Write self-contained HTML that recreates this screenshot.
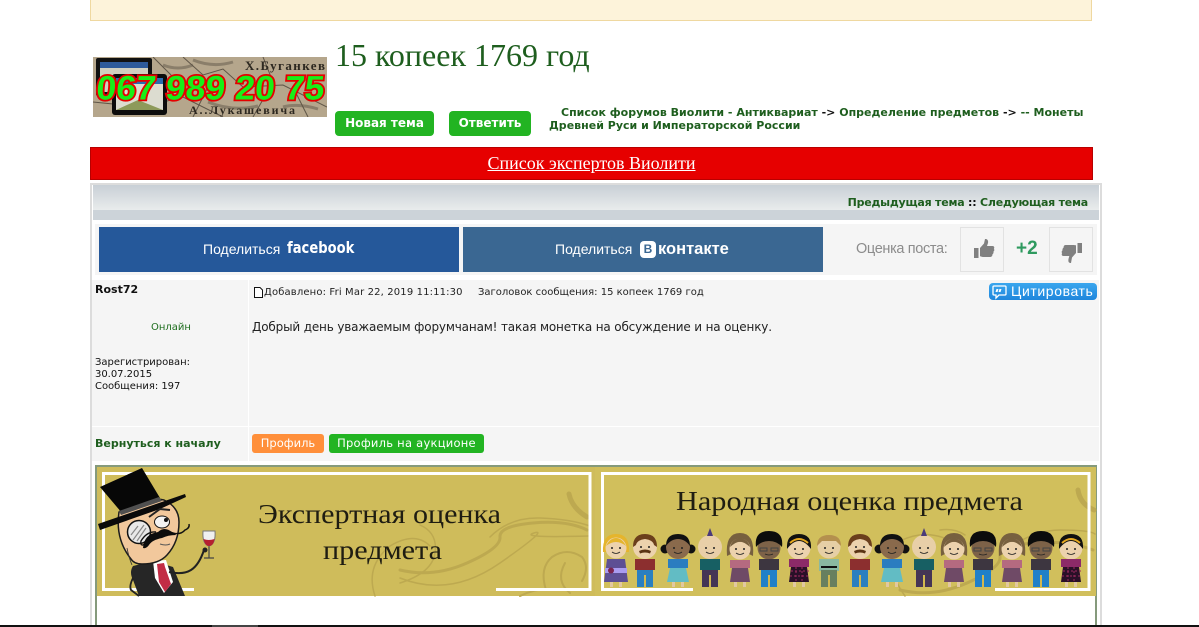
<!DOCTYPE html>
<html lang="ru"><head><meta charset="utf-8"><title>15 копеек 1769 год</title>
<style>
html,body{margin:0;padding:0;background:#fff;width:1199px;height:627px;overflow:hidden}
body{position:relative;font-family:"DejaVu Sans","Liberation Sans",sans-serif}
.a{position:absolute;white-space:nowrap}
.g{color:#1e5e1e;font-weight:bold}
.btn{background:#22b422;color:#fff;font-weight:bold;border-radius:4px;text-align:center;font-size:12px;line-height:25px;height:25px}
.box{position:absolute;top:227px;width:42px;height:43px;border:1px solid #e2e2e2;background:#f5f5f5}
</style></head><body>
<div class="a" style="left:90px;top:-1px;width:1000px;height:20px;background:#fdf3da;border:1px solid #efd8a0"></div>

<svg class="a" style="left:93px;top:57px" width="234" height="60" viewBox="0 0 234 60">
<rect width="234" height="60" fill="#b5a68c"/>
<g stroke="#5f5547" fill="none" stroke-width="1">
<path d="M90 0L110 18 130 12 150 30 190 28 234 50M170 0L180 25 160 60M0 45L50 50 90 40 130 60M120 20L100 60M200 30L215 60M60 0L85 25"/>
<path d="M100 3q20 8 40 2M115 45q25 10 50 4M190 50q15-4 35 2M70 8q15 6 30 0" stroke-width="3" opacity=".5"/>
</g>
<text x="152" y="13" font-family="Liberation Serif" font-size="13" font-weight="bold" fill="#2d2820" textLength="80">Х.Буганкев</text>
<text x="96" y="57" font-family="Liberation Serif" font-size="12" font-weight="bold" fill="#2d2820" textLength="106">А..Лукашевича</text>
<rect x="3" y="1" width="56" height="38" rx="2" fill="#111"/><rect x="7" y="5" width="48" height="30" fill="#cfcfc0"/><rect x="7" y="5" width="48" height="6" fill="#2d5a9a"/>
<rect x="19" y="17" width="55" height="41" rx="3" fill="#0c0c0c"/><rect x="23" y="21" width="47" height="32" fill="#dcdcd0"/><rect x="23" y="21" width="47" height="6" fill="#2a6cb0"/>
<path d="M23 53L45 43 70 53Z" fill="#8d9a5a"/>
<g transform="translate(1.500,42.500) skewX(-5)">
<text x="1" y="0" font-family="Liberation Sans" font-size="34" font-weight="bold" fill="#18ee18" stroke="#e60000" stroke-width="3.600" paint-order="stroke" textLength="228" lengthAdjust="spacingAndGlyphs">067 989 20 75</text>
</g>
</svg>

<div class="a" style="left:335px;top:37px;font:32px 'Liberation Serif',serif;color:#1e5e1e">15 копеек 1769 год</div>
<div class="a btn" style="left:335px;top:111px;width:99px">Новая тема</div>
<div class="a btn" style="left:449px;top:111px;width:82px">Ответить</div>
<div class="a g" style="left:561px;top:106px;font-size:11px;line-height:13px">Список форумов Виолити - Антиквариат <span style="color:#111">-&gt;</span> Определение предметов <span style="color:#111">-&gt;</span> -- Монеты</div>
<div class="a g" style="left:549px;top:119px;font-size:11px;line-height:13px;letter-spacing:.01px">Древней Руси и Императорской России</div>

<div class="a" style="left:90px;top:147px;width:1001px;height:31px;background:#e60000;border:1px solid #b80000;text-align:center;font:18px/31px 'Liberation Serif',serif;color:#fff;text-decoration:underline">Список экспертов Виолити</div>

<div class="a" style="left:90px;top:183px;width:1008px;height:460px;border:2px solid #dcdcdc;border-bottom:0"></div>
<div class="a" style="left:93px;top:185px;width:1006px;height:25px;background:linear-gradient(#c8cfd6,#e9ecec)"></div>
<div class="a" style="left:93px;top:210px;width:1006px;height:10px;background:#ccd3d9"></div>
<div class="a g" style="right:111px;top:196px;font-size:11px;line-height:14px;letter-spacing:-.22px">Предыдущая тема <span style="color:#111">::</span> Следующая тема</div>

<div class="a" style="left:95px;top:224px;width:1002px;height:51px;background:#f5f5f5"></div>
<div class="a" style="left:99px;top:227px;width:360px;height:45px;background:#25589a"></div>
<div class="a" style="left:203px;top:240px;font:14px/18px 'Liberation Sans',sans-serif;color:#fff">Поделиться</div>
<div class="a" style="left:287px;top:238px;font:bold 16px/20px 'DejaVu Sans',sans-serif;color:#fff;transform:scaleX(.82);transform-origin:0 0">facebook</div>
<div class="a" style="left:463px;top:227px;width:360px;height:45px;background:#3a6792"></div>
<div class="a" style="left:555px;top:240px;font:14px/18px 'Liberation Sans',sans-serif;color:#fff">Поделиться</div>
<div class="a" style="left:640px;top:241px;width:16px;height:17px;border-radius:4px;background:#fff;color:#3a6792;font:bold 12px/17px 'Liberation Sans',sans-serif;text-align:center">В</div>
<div class="a" style="left:658px;top:239px;font:bold 16.5px/20px 'Liberation Sans',sans-serif;color:#fff">контакте</div>
<div class="a" style="left:856px;top:241px;font:14.5px/17px 'Liberation Sans',sans-serif;color:#8c8c8c;letter-spacing:-.35px">Оценка поста:</div>
<div class="box" style="left:960px"></div>
<svg class="a" style="left:973px;top:238px" width="22" height="22" viewBox="0 0 22 22"><path d="M1 10h4.500v10H1zM7 10l4-4.500L12 1c2.300-.4 3.500 1.500 3 4l-1 3h5.500c1.800 0 2.200 1.800 1.400 2.800.7 1 .5 2.200-.5 2.900.4 1-.1 2.200-1 2.700.2 1.300-.7 2.600-2 2.600H10c-1.400 0-2-.8-3-.8z" fill="#808080"/></svg>
<div class="a" style="left:1016px;top:238px;font:bold 19px/22px 'Liberation Sans',sans-serif;color:#2f9a5f">+2</div>
<div class="box" style="left:1049px"></div>
<svg class="a" style="left:1061px;top:242px" width="22" height="22" viewBox="0 0 22 22"><path d="M16.500 1H21v10h-4.500zM15 11l-4 4.500L10 21c-2.300.4-3-1.500-2.500-4l.8-3H2.500C.7 14 .3 12.200 1.100 11.200.4 10.200.600 9 1.600 8.300c-.4-1 .1-2.200 1-2.700C2.400 4.300 3.300 3 4.600 3H12c1.400 0 2 .3 3 .3z" fill="#808080"/></svg>

<div class="a" style="left:92px;top:280px;width:156px;height:146px;background:#f5f5f5"></div>
<div class="a" style="left:249px;top:280px;width:850px;height:146px;background:#f5f5f5"></div>
<div class="a" style="left:92px;top:427px;width:156px;height:34px;background:#f5f5f5"></div>
<div class="a" style="left:249px;top:427px;width:850px;height:34px;background:#f5f5f5"></div>

<div class="a" style="left:95px;top:283px;font-size:11px;font-weight:bold;line-height:14px;color:#111">Rost72</div>
<div class="a" style="left:151px;top:321px;font-size:10px;line-height:13px;color:#1e6e1e">Онлайн</div>
<div class="a" style="left:95px;top:357px;font-size:10px;line-height:12px;color:#111;letter-spacing:-.02px">Зарегистрирован:<br>30.07.2015<br>Сообщения: 197</div>
<div class="a g" style="left:95px;top:437px;font-size:11px;line-height:14px">Вернуться к началу</div>

<svg class="a" style="left:254px;top:287px" width="9" height="11" viewBox="0 0 9 11"><path d="M.5.500h5.500l2.500 2.500v7.500H.5z" fill="#fff" stroke="#111"/></svg>
<div class="a" style="left:264px;top:286px;font-size:10px;line-height:13px;color:#222;letter-spacing:.14px">Добавлено: Fri Mar 22, 2019 11:11:30</div>
<div class="a" style="left:478px;top:286px;font-size:10px;line-height:13px;color:#222">Заголовок сообщения: 15 копеек 1769 год</div>
<div class="a" style="left:989px;top:283px;width:108px;height:17px;border-radius:4px;background:linear-gradient(#3aa6ee,#1f86dc)"></div>
<svg class="a" style="left:992px;top:285px" width="15" height="15" viewBox="0 0 15 15"><path d="M2 1h11a1 1 0 0 1 1 1v7a1 1 0 0 1-1 1H7l-3 3v-3H2a1 1 0 0 1-1-1V2a1 1 0 0 1 1-1z" fill="none" stroke="#fff" stroke-width="1.300"/><path d="M5 4l-1 3M8 4L7 7M6 4L5 7M9 4L8 7" stroke="#fff" stroke-width="1"/></svg>
<div class="a" style="left:1011px;top:283px;font:14px/17px 'Liberation Sans',sans-serif;color:#fff;letter-spacing:.6px">Цитировать</div>
<div class="a" style="left:252px;top:320px;font-size:12px;line-height:15px;color:#222;letter-spacing:-.16px">Добрый день уважаемым форумчанам! такая монетка на обсуждение и на оценку.</div>

<div class="a" style="left:252px;top:434px;width:72px;height:19px;border-radius:3px;background:#ff8f3a;color:#fff;text-align:center;font-size:11.500px;line-height:18px">Профиль</div>
<div class="a" style="left:329px;top:434px;width:155px;height:19px;border-radius:3px;background:#22b422;color:#fff;text-align:center;font-size:11.500px;line-height:18px;letter-spacing:.25px">Профиль на аукционе</div>

<svg class="a" style="left:95px;top:465px" width="1003" height="162" viewBox="95 465 1003 162">
<defs>
<g id="feet"><rect x="-6" y="36" width="3" height="6" fill="#e2c8a0"/><rect x="3" y="36" width="3" height="6" fill="#e2c8a0"/></g>
<g id="face"><circle cx="-4" cy="0" r="1" fill="#222"/><circle cx="4" cy="0" r="1" fill="#222"/><path d="M-4 4q4 3 8 0" fill="none" stroke="#222" stroke-width=".8"/></g>
<g id="p1"><use href="#feet"/><g transform="translate(0,2)"><path d="M-13 5q-1-18 13-18t13 18z" fill="#e5b52d"/><circle r="10.500" cy="1" fill="#ecd2ad"/><path d="M-10-1q4-8 10-8t10 8q-5-4-10-4t-10 4z" fill="#e5b52d"/><use href="#face" y="1"/></g><path d="M-9 14h18l3 23h-24z" fill="#5d4f94"/><rect x="-11" y="23" width="22" height="5" fill="#a99cf0"/><circle cx="-5" cy="25.500" r="3" fill="#7a2550"/></g>
<g id="p2"><g transform="translate(0,2)"><circle r="12" fill="#ecd2ad"/><path d="M-12 0q0-13 12-13T12 0L9-2q-1-5-9-6-8 1-9 6z" fill="#6b3f1c"/><path d="M-6 4q6-3 12 0l-1 2.500q-5-2-10 0z" fill="#5a3415"/><circle cx="-4" cy="0" r="1" fill="#222"/><circle cx="4" cy="0" r="1" fill="#222"/></g><rect x="-10" y="14" width="20" height="11" fill="#8c2f2f"/><rect x="-8" y="25" width="16" height="17" fill="#2a7fc0"/><rect x="-1" y="30" width="2" height="12" fill="#d2b84f"/></g>
<g id="p3"><use href="#feet"/><g transform="translate(0,2)"><circle cx="-13" cy="2" r="4.500" fill="#111"/><circle cx="13" cy="2" r="4.500" fill="#111"/><circle r="12" fill="#8a6a4c"/><path d="M-12-1q0-12 12-12t12 12q-5-7-12-7t-12 7z" fill="#111"/><use href="#face" y="1"/></g><rect x="-10" y="14" width="20" height="9" fill="#2b7dc0"/><path d="M-8 23h16l3 14h-22z" fill="#62bcc4"/></g>
<g id="p4"><g transform="translate(0,2)"><circle r="12" fill="#e8cfa8"/><path d="M-3-11L0-19 3-11z" fill="#4a3a7a"/><use href="#face" y="1"/></g><rect x="-10" y="14" width="20" height="11" fill="#175f63"/><rect x="-8" y="25" width="16" height="17" fill="#453555"/><rect x="-1" y="30" width="2" height="12" fill="#d2b84f"/></g>
<g id="p5"><use href="#feet"/><g transform="translate(0,2)"><path d="M-13 9q-2-23 13-23t13 23l-4-2H-9z" fill="#77603f"/><circle r="10.500" cy="2" fill="#ecd2ad"/><path d="M-10 0q2-8 10-9 8 1 10 9-7-6-10-5-3-1-10 5z" fill="#77603f"/><use href="#face" y="2"/></g><rect x="-10" y="15" width="20" height="8" fill="#b56a80"/><path d="M-8 23h16l2 14h-20z" fill="#6f4a66"/></g>
<g id="p6"><g transform="translate(0,2)"><circle r="11.500" cy="1" fill="#7d6248"/><path d="M-13 0q-2-16 13-16T13 0Q8-6 0-6T-13 0z" fill="#0c0c0c"/><path d="M-9 1h7v3h-7zM2 1h7v3H2z" fill="none" stroke="#444" stroke-width="1"/><path d="M-4 7q4 2 8 0" fill="none" stroke="#222" stroke-width=".8"/></g><rect x="-10" y="14" width="20" height="11" fill="#3d3640"/><rect x="-8" y="25" width="16" height="17" fill="#2080c8"/><rect x="-1" y="30" width="2" height="12" fill="#d2b84f"/></g>
<g id="p7"><use href="#feet"/><g transform="translate(0,2)"><circle r="11.500" cy="1" fill="#ecd2ad"/><path d="M-12 2q-1-15 12-15T12 2Q6-6 0-6T-12 2z" fill="#111"/><path d="M-9-4Q0-12 9-4" stroke="#e5a820" stroke-width="2" fill="none"/><use href="#face" y="2"/></g><rect x="-10" y="14" width="20" height="8" fill="#8c2a68"/><path d="M-8 22h16l2 15h-20z" fill="#2a1028"/><path d="M-8 26h18M-9 31h20M-3 22v15M3 22v15" stroke="#a02a60" stroke-width="1" stroke-dasharray="2 2"/></g>
<g id="p8"><g transform="translate(0,2)"><circle r="11.500" fill="#e6cfa5"/><path d="M-12-1q0-11 12-11T12-1L7-6H-7z" fill="#b4904e"/><use href="#face" y="1"/></g><rect x="-10" y="14" width="20" height="12" fill="#8ab8a0"/><rect x="-8" y="21" width="16" height="2" fill="#111"/><rect x="-8" y="25" width="16" height="17" fill="#687f5f"/><rect x="-1" y="30" width="2" height="12" fill="#d2b84f"/></g>
</defs>
<rect x="96" y="466" width="1000" height="162" fill="#fff" stroke="#859a7c" stroke-width="2"/>
<rect x="97" y="467" width="498" height="129" fill="#cfbc5b"/>
<rect x="595" y="467" width="501" height="129" fill="#d1bf5c"/>
<g fill="none" stroke="#bda950" stroke-linecap="round">
<path d="M400 570q33 8 67-7t33-26 33-14 54 7" stroke-width="3"/>
<path d="M400 578q50 20 100-15t34-30 55 3" stroke-width="1.500"/>
<path d="M490 537q20-20 50-19t50 8" stroke-width="1.500"/>
<path d="M420 525q18 8 15 28t-35 30M375 596q-10-30 15-50 25-15 40 0" stroke-width="1.500"/>
<path d="M546 590q-7-22 6-33 15-10 30 0 8 10 0 24M570 593q-15-12-5-30" stroke-width="2"/>
<path d="M520 596q20-10 40-6" stroke-width="2"/>
<path d="M569 494q3 14 18 23" stroke-width="5"/>
</g>
<g fill="none" stroke="#bda950" stroke-linecap="round">
<path d="M900 590q33 8 67-7t33-26 33-14 60 7" stroke-width="3"/>
<path d="M905 596q-22-30-5-55 30-15 60 5M940 530q15-2 25 5" stroke-width="1.500"/>
<path d="M1000 555q30-25 60-25t35 4" stroke-width="1.500"/>
<path d="M1078 490q2 14 16 20" stroke-width="5"/>
</g>
<g fill="none" stroke="#fff" stroke-width="3">
<path d="M194 589.500H103.500V473.500H590V589.500H496"/>
<path d="M693 589.500H602.500V473.500H1089V589.500H995"/>
</g>
<g font-family="Liberation Serif,DejaVu Serif,serif" fill="#1f1d12">
<text x="258" y="523" font-size="27" textLength="243" lengthAdjust="spacingAndGlyphs">Экспертная оценка</text>
<text x="323" y="559" font-size="27" textLength="119" lengthAdjust="spacingAndGlyphs">предмета</text>
<text x="676" y="510" font-size="27" textLength="347" lengthAdjust="spacingAndGlyphs">Народная оценка предмета</text>
</g>
<!-- man -->
<path d="M139 596l-6-16q-4-8 0-14l20-5 20 6 12 29z" fill="#262626"/>
<path d="M153 561l13-1 7 22-9 11-9-15z" fill="#fff"/><path d="M157 564l7-1 1 4 6 17-6 8-6-10z" fill="#c22c45"/>
<path d="M133 578q-4 8-2 12l8 6" fill="none" stroke="#222" stroke-width="1.800"/>
<path d="M169 572q14 3 22-2t13-20" fill="none" stroke="#222" stroke-width="2"/>
<path d="M119 512q20-18 45-12 15 7 15 22 0 20-12 33-8 9-25 9-8 0-11-5-16-20-12-47z" fill="#f2c89c" stroke="#1c1c1c" stroke-width="1.500"/>
<path d="M100 487l42-19 18 30-38 15z" fill="#070707"/>
<path d="M98 524l87-30 1 3-26 12-60 21z" fill="#0a0a0a"/><path d="M119 511l40-14 3 4-41 14z" fill="#505050"/>
<path d="M127 548q2 10 5 17" fill="none" stroke="#333" stroke-width=".8"/>
<circle cx="139" cy="532" r="11.500" fill="#e8e8e8" stroke="#111" stroke-width="1.500"/><path d="M133 540l11-15M137 541l9-13M131 535l7-9" stroke="#888" stroke-width="1.200"/>
<ellipse cx="162" cy="522" rx="7.500" ry="6" fill="#f3f3f3" stroke="#111"/><circle cx="166" cy="520" r="2" fill="#111"/>
<path d="M149 517l11-8 10 1" fill="none" stroke="#222" stroke-width="2"/>
<path d="M145 544q-5 3-4-3 6-10 15-9M170 532q10 4 15-2 5-2 4-6" fill="none" stroke="#111" stroke-width="1.400"/>
<path d="M143 548q1-14 15-16 6-6 14 0 4 2 4 3-8 0-14 3-10 2-13 7-3 4-6 3z" fill="#0c0c0c"/>
<path d="M160 544q6 2 10 0" fill="none" stroke="#555"/>
<path d="M209 545v13M204 558h10" stroke="#444" stroke-width="1.200" fill="none"/>
<path d="M203 531h12q1 13-6 15-7-2-6-15z" fill="#f0f0f0" stroke="#777"/><path d="M203.500 539q5 2 11 0-1 7-5.500 7-4 0-5.500-7z" fill="#b52030"/>
<circle cx="205" cy="550" r="2.500" fill="#222"/>
<!-- people -->
<use href="#p1" x="616" y="545"/><use href="#p2" x="645" y="545"/><use href="#p3" x="678" y="545"/><use href="#p4" x="710" y="545"/>
<use href="#p5" x="740" y="545"/><use href="#p6" x="769" y="545"/><use href="#p7" x="799" y="545"/><use href="#p8" x="829" y="545"/>
<use href="#p2" x="860" y="545"/><use href="#p3" x="892" y="545"/><use href="#p4" x="924" y="545"/><use href="#p5" x="954" y="545"/>
<use href="#p6" x="983" y="545"/><use href="#p5" x="1012" y="545"/><use href="#p6" x="1041" y="545"/><use href="#p7" x="1071" y="545"/>
</svg>
<div class="a" style="left:0;top:625px;width:1199px;height:2px;background:#111"></div>
<div class="a" style="left:212px;top:625px;width:46px;height:2px;background:#444"></div>
</body></html>
